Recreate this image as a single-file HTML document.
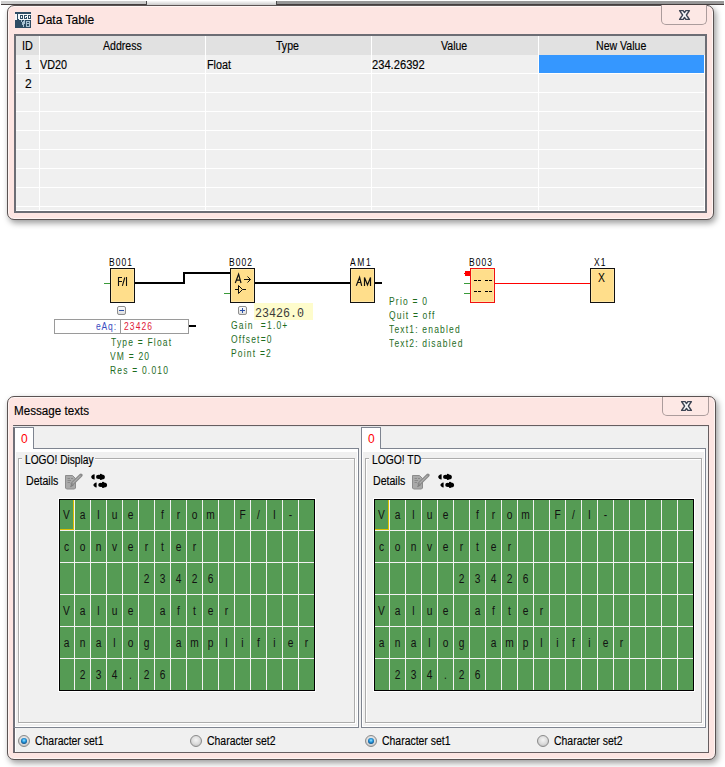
<!DOCTYPE html>
<html><head><meta charset="utf-8">
<style>
*{margin:0;padding:0;box-sizing:border-box}
html,body{width:725px;height:767px;overflow:hidden;background:#fff;font-family:"Liberation Sans",sans-serif;color:#000}
.a{position:absolute}
.t{position:absolute;white-space:pre;line-height:1}
.win{position:absolute;background:#fde5e2;border:1px solid #5a5252;border-radius:7px;box-shadow:inset 0 0 0 1px rgba(255,255,255,.6),2px 3px 6px rgba(0,0,0,.4)}
.closeb{position:absolute;border:1px solid #ab9c9c;border-top:none;border-radius:0 0 5px 5px;background:#fde8e5}
.ui{position:absolute;white-space:pre;line-height:1;font-size:12px;color:#000;-webkit-text-stroke:.15px #000}
.blk{position:absolute;width:25px;height:35px;border:1px solid #111;background:#ffde8b;box-shadow:inset 0 0 0 1px #ffe6a4}
.lbl{position:absolute;white-space:pre;font-size:10px;letter-spacing:1.2px;line-height:1;color:#000;transform:scaleX(.85);transform-origin:0 0}
.g{position:absolute;white-space:pre;font-size:10px;letter-spacing:1.4px;line-height:1;color:#1e6c1e;transform:scaleX(.85);transform-origin:0 0}
.w{position:absolute;background:#000}
.gr{position:absolute;background:#3a9a3a;height:1px}
.grid{position:absolute;border-collapse:collapse}
.lcd{position:absolute;background:#000;padding:1px}
.lc{background:#559b54;overflow:visible}
.lc span{position:absolute;left:0;top:1px;width:15px;height:31px;font-size:12px;line-height:31px;text-align:center;color:#111;transform:scaleX(.85)}
.s88{transform:scaleX(.88);transform-origin:0 0}
.s9{transform:scaleX(.9);transform-origin:0 0}
.s9c{transform:scaleX(.9);transform-origin:50% 0}
.radio{position:absolute;width:12px;height:12px;border-radius:50%;border:1px solid #8a8a8a;background:radial-gradient(circle at 50% 40%,#f4f4f4 0%,#dadada 55%,#c4c4c4 75%,#f8f8f8 90%)}
.radio.on::after{content:"";position:absolute;left:2px;top:2px;width:6px;height:6px;border-radius:50%;background:radial-gradient(circle at 50% 40%,#9ae4ff 0%,#2c9ee4 35%,#0f568f 70%,#16304a 100%)}
</style></head><body>

<!-- top strip (scrollbar) -->
<div class="a" style="left:1px;top:1px;width:145px;height:3px;background:#cfcfcf"></div>
<div class="a" style="left:147px;top:1px;width:129px;height:4px;background:linear-gradient(#f8f8f8,#d8d8d8)"></div>
<div class="a" style="left:277px;top:1px;width:447px;height:3px;background:#9a9a9a"></div>
<div class="a" style="left:1px;top:4px;width:145px;height:1px;background:#484242"></div>
<div class="a" style="left:277px;top:4px;width:447px;height:1px;background:#484242"></div>
<div class="a" style="left:146px;top:1px;width:1px;height:4px;background:#505050"></div>
<div class="a" style="left:276px;top:1px;width:1px;height:4px;background:#505050"></div>

<!-- ============ Data Table window ============ -->
<div class="win" style="left:7px;top:5px;width:707px;height:215px"></div>
<!-- icon -->
<svg class="a" style="left:15px;top:12px" width="16" height="16" viewBox="0 0 16 16" shape-rendering="crispEdges">
<rect width="16" height="16" fill="#2e4c64"/>
<rect x="0" y="2" width="16" height="6" fill="#f4f6f8"/>
<path d="M2 2h1v5h1v1H2z" fill="#2e4c64"/>
<path d="M5 3h3v4H5zM6 4h1v2H6z" fill="#2e4c64" fill-rule="evenodd"/>
<path d="M9 3h3v1h-2v2h1v-1h1v2H9z" fill="#2e4c64"/>
<path d="M13 3h3v4h-3zM14 4h1v2h-1z" fill="#2e4c64" fill-rule="evenodd"/>
<path d="M6 8h1l1 3 1-3h1v2l-1 5H8z" fill="#a9c1d2"/>
<path d="M11 9h4v6h-4zM12 10h2v1h-2zM12 12h2v2h-2z" fill="#a9c1d2" fill-rule="evenodd"/>
</svg>
<div class="ui" style="left:37px;top:14px">Data Table</div>
<div class="closeb" style="left:661px;top:5px;width:46px;height:20px"></div>
<svg class="a" style="left:678px;top:9px" width="13" height="12" viewBox="0 0 13 12">
<path d="M1.6 1.6H5.2L6.5 3.6L7.8 1.6H11.4L8.4 6L11.4 10.4H7.8L6.5 8.4L5.2 10.4H1.6L4.6 6Z" fill="#f8f8fa" stroke="#3c4352" stroke-width="1.4" stroke-linejoin="round"/>
</svg>

<!-- table -->
<div class="a" style="left:14px;top:34px;width:693px;height:179px;border:2px solid #6c6d74;background:#f0f0f0;box-shadow:inset -1px -1px 0 #fff"></div>
<div class="a" style="left:16px;top:36px;width:689px;height:19px;background:#e1e1e1"></div>
<!-- row lines -->
<div class="a" style="left:16px;top:73px;width:689px;height:1px;background:#fff"></div>
<div class="a" style="left:16px;top:92px;width:689px;height:1px;background:#fff"></div>
<div class="a" style="left:16px;top:111px;width:689px;height:1px;background:#fff"></div>
<div class="a" style="left:16px;top:130px;width:689px;height:1px;background:#fff"></div>
<div class="a" style="left:16px;top:149px;width:689px;height:1px;background:#fff"></div>
<div class="a" style="left:16px;top:168px;width:689px;height:1px;background:#fff"></div>
<div class="a" style="left:16px;top:187px;width:689px;height:1px;background:#fff"></div>
<div class="a" style="left:16px;top:206px;width:689px;height:1px;background:#fff"></div>
<!-- col lines -->
<div class="a" style="left:39px;top:36px;width:1px;height:174px;background:#fff"></div>
<div class="a" style="left:205px;top:36px;width:1px;height:174px;background:#fff"></div>
<div class="a" style="left:371px;top:36px;width:1px;height:174px;background:#fff"></div>
<div class="a" style="left:538px;top:36px;width:1px;height:174px;background:#fff"></div>
<div class="a" style="left:539px;top:55px;width:165px;height:18px;background:#3597ff"></div>
<!-- header text -->
<div class="ui s9" style="left:22px;top:40px">ID</div>
<div class="ui s88" style="left:103px;top:40px">Address</div>
<div class="ui s88" style="left:276px;top:40px">Type</div>
<div class="ui s88" style="left:441px;top:40px">Value</div>
<div class="ui s88" style="left:596px;top:40px">New Value</div>
<div class="ui" style="left:25px;top:59px">1</div>
<div class="ui" style="left:25px;top:78px">2</div>
<div class="ui s9" style="left:40px;top:59px">VD20</div>
<div class="ui s9" style="left:207px;top:59px">Float</div>
<div class="ui s9" style="left:372px;top:59px;transform:scaleX(.93)">234.26392</div>

<!-- ============ Diagram ============ -->
<div class="lbl" style="left:109px;top:258px">B001</div>
<div class="blk" style="left:110px;top:268px"></div>
<svg class="a" style="left:111px;top:269px" width="23" height="33" viewBox="0 0 23 33">
<path d="M7.5 8V17M7 8.5H11M7 12.5H11M13.8 8.5L11.4 16.8M15.5 8V17" stroke="#111" stroke-width="1.1" fill="none"/>
</svg>
<div class="gr" style="left:104px;top:283px;width:6px"></div>
<div class="w" style="left:135px;top:282px;width:50px;height:2px"></div>
<div class="w" style="left:183px;top:272px;width:2px;height:12px"></div>
<div class="w" style="left:183px;top:272px;width:47px;height:2px"></div>
<!-- minus btn -->
<div class="a" style="left:117px;top:306px;width:9px;height:9px;border:1px solid #8d8d8d;border-radius:2px;background:linear-gradient(#fdfdfd,#dedede)"></div>
<div class="a" style="left:119px;top:310px;width:5px;height:1px;background:#2a4fa8"></div>
<!-- eAq -->
<div class="a" style="left:54px;top:319px;width:135px;height:15px;border:1px solid #9a9a9a;background:#fff"></div>
<div class="a" style="left:120px;top:320px;width:1px;height:13px;background:#9a9a9a"></div>
<div class="t" style="left:96px;top:322px;font-size:10px;color:#3a4cc0;letter-spacing:1px;transform:scaleX(.85);transform-origin:0 0">eAq:</div>
<div class="t" style="left:124px;top:322px;font-size:10px;color:#e01838;letter-spacing:1.3px;transform:scaleX(.85);transform-origin:0 0">23426</div>
<div class="w" style="left:189px;top:325px;width:7px;height:2px"></div>
<div class="g" style="left:111px;top:338px">Type = Float</div>
<div class="g" style="left:110px;top:352px">VM = 20</div>
<div class="g" style="left:110px;top:366px">Res = 0.010</div>

<div class="lbl" style="left:229px;top:258px">B002</div>
<div class="blk" style="left:230px;top:268px"></div>
<svg class="a" style="left:231px;top:269px" width="23" height="33" viewBox="0 0 23 33">
<path d="M4.3 14L7.6 5.2L10 14M5.3 11.2H9.2" stroke="#111" stroke-width="1.2" fill="none"/>
<path d="M13 10.5H19.5M16.5 7.5L19.5 10.5L16.5 13.5" stroke="#111" stroke-width="1" fill="none"/>
<path d="M4 20.5H7.5M11.5 20.5H15M7.5 16.5V24.5L11.5 20.5Z" stroke="#111" stroke-width="1" fill="none"/>
</svg>
<div class="gr" style="left:224px;top:293px;width:6px"></div>
<div class="w" style="left:255px;top:282px;width:95px;height:2px"></div>
<div class="a" style="left:238px;top:306px;width:9px;height:9px;border:1px solid #8d8d8d;border-radius:2px;background:linear-gradient(#fdfdfd,#dedede)"></div>
<div class="a" style="left:240px;top:310px;width:5px;height:1px;background:#2a4fa8"></div>
<div class="a" style="left:242px;top:308px;width:1px;height:5px;background:#2a4fa8"></div>
<div class="a" style="left:254px;top:303px;width:59px;height:17px;background:#fefccc"></div>
<div class="t" style="left:255px;top:308px;font-family:'Liberation Mono',monospace;font-size:12px;color:#3a3a3a;transform:scaleX(.97);transform-origin:0 0">23426.0</div>
<div class="g" style="left:231px;top:321px">Gain  =1.0+</div>
<div class="g" style="left:231px;top:335px">Offset=0</div>
<div class="g" style="left:231px;top:349px">Point =2</div>

<div class="lbl" style="left:350px;top:258px;letter-spacing:1.9px">AM1</div>
<div class="blk" style="left:350px;top:268px"></div>
<svg class="a" style="left:351px;top:269px" width="23" height="33" viewBox="0 0 23 33">
<path d="M5.3 16.8L8.6 8.3L10.7 16.8M6.5 13.5H10M13.5 17V8.5L16.5 16L19.5 8.5V17" stroke="#111" stroke-width="1.2" fill="none"/>
</svg>
<div class="w" style="left:375px;top:282px;width:7px;height:2px"></div>
<div class="g" style="left:389px;top:297px">Prio = 0</div>
<div class="g" style="left:389px;top:311px">Quit = off</div>
<div class="g" style="left:389px;top:325px">Text1: enabled</div>
<div class="g" style="left:389px;top:339px">Text2: disabled</div>

<div class="lbl" style="left:469px;top:258px">B003</div>
<div class="blk" style="left:470px;top:268px;border-color:#f01010"></div>
<div class="a" style="left:465px;top:271px;width:5px;height:5px;background:#f00"></div>
<div class="a" style="left:464px;top:273px;width:2px;height:1px;background:#f00"></div>
<div class="gr" style="left:464px;top:283px;width:6px"></div>
<div class="gr" style="left:464px;top:293px;width:6px"></div>
<svg class="a" style="left:471px;top:269px" width="23" height="33" shape-rendering="crispEdges">
<path d="M3 11h3v1H3zM7 11h3v1H7zM14 11h3v1h-3zM18 11h3v1h-3zM3 22h3v1H3zM7 22h3v1H7zM14 22h3v1h-3zM18 22h3v1h-3z" fill="#000"/>
</svg>
<div class="a" style="left:495px;top:283px;width:95px;height:1px;background:#f00"></div>

<div class="lbl" style="left:594px;top:258px">X1</div>
<div class="blk" style="left:590px;top:268px"></div>
<div class="t" style="left:598px;top:272px;font-size:12px;transform:scaleX(.86);transform-origin:0 0">X</div>

<!-- ============ Message texts window ============ -->
<div class="win" style="left:7px;top:396px;width:709px;height:364px"></div>
<div class="ui" style="left:14px;top:405px;transform:scaleX(.97);transform-origin:0 0">Message texts</div>
<div class="closeb" style="left:662px;top:397px;width:47px;height:19px"></div>
<svg class="a" style="left:680px;top:400px" width="13" height="12" viewBox="0 0 13 12">
<path d="M1.6 1.6H5.2L6.5 3.6L7.8 1.6H11.4L8.4 6L11.4 10.4H7.8L6.5 8.4L5.2 10.4H1.6L4.6 6Z" fill="#f8f8fa" stroke="#3c4352" stroke-width="1.4" stroke-linejoin="round"/>
</svg>

<!-- outer container -->
<div class="a" style="left:13px;top:425px;width:696px;height:328px;border:1px solid #665e60;border-left:2px solid #6c6870;background:#f0f0f0;box-shadow:inset 1px 1px 0 #fff"></div>

<!-- left tab panel -->
<div class="a" style="left:13px;top:448px;width:346px;height:280px;border:1px solid #7e8490;border-left:2px solid #70707a;background:#f0f0f0;box-shadow:inset 1px 3px 0 #fff, inset -1px -1px 0 #fff"></div>
<div class="a" style="left:13px;top:427px;width:21px;height:22px;background:#fff;border-top:1px solid #7e8490;border-right:1px solid #7e8490;border-left:2px solid #707078"></div>
<div class="a" style="left:13px;top:426px;width:695px;height:1px;background:#e6e6e8"></div>
<div class="t" style="left:21px;top:433px;font-size:12px;color:#f00">0</div>
<div class="a" style="left:18px;top:458px;width:337px;height:265px;border:1px solid #acacac;box-shadow:inset 1px 1px 0 #fff,1px 1px 0 #fff"></div>
<div class="a" style="left:22px;top:454px;width:73px;height:10px;background:#f0f0f0"></div>
<div class="ui s88" style="left:25px;top:454px;transform:scaleX(.85)">LOGO! Display</div>
<div class="ui s88" style="left:26px;top:475px">Details</div>
<svg class="a" style="left:64px;top:473px" width="20" height="17" viewBox="0 0 20 17">
<path d="M1.5 2.5H8.5L11.5 5.5V15L10.5 16H2.5L1.5 15Z" fill="#a9a9a9" stroke="#8c8c8c"/>
<path d="M3.5 5.5H6M7 5.5H9M3.5 7.5H7M3.5 9.5H6" stroke="#8a8a8a" stroke-width="1"/>
<path d="M16.9 2.3L8.3 10.7" stroke="#8a8a8a" stroke-width="3.4" stroke-linecap="round"/>
<path d="M16.6 2.6L8.5 10.5" stroke="#b0b0b0" stroke-width="1.1"/>
<path d="M8.3 10.7L6.6 13.6L9.4 12.2" fill="#9a9a9a" stroke="#7e7e7e" stroke-width="1"/>
</svg>
<svg class="a" style="left:90px;top:472px" width="19" height="18" viewBox="0 0 19 18">
<path d="M4.6 2.3C2.6 2.5 1.2 3.8 1.2 4.9S2.6 7.4 4.6 7.6Z" fill="#000"/>
<ellipse cx="8.6" cy="4.9" rx="2.6" ry="2.1" fill="#000"/><ellipse cx="11.8" cy="4.9" rx="3.1" ry="2.5" fill="#000"/><circle cx="10.8" cy="2.8" r="1.05" fill="#000"/><circle cx="10.8" cy="7" r="1.05" fill="#000"/>
<path d="M6.6 10.4C4.8 10.6 3.4 12 3.4 13S4.8 15.4 6.6 15.6Z" fill="#000"/>
<ellipse cx="10.8" cy="12.9" rx="2.6" ry="2.1" fill="#000"/><ellipse cx="14" cy="12.9" rx="3.1" ry="2.5" fill="#000"/><circle cx="13" cy="10.8" r="1.05" fill="#000"/><circle cx="13" cy="15" r="1.05" fill="#000"/>
</svg>


<!-- right tab panel -->
<div class="a" style="left:361px;top:448px;width:345px;height:280px;border:1px solid #7e8490;background:#f0f0f0;box-shadow:inset 1px 3px 0 #fff, inset -1px -1px 0 #fff"></div>
<div class="a" style="left:361px;top:427px;width:20px;height:22px;background:#fff;border-top:1px solid #7e8490;border-right:1px solid #7e8490;border-left:1px solid #7e8490"></div>
<div class="a" style="left:362px;top:448px;width:18px;height:1px;background:#fff"></div>
<div class="t" style="left:368px;top:433px;font-size:12px;color:#f00">0</div>
<div class="a" style="left:365px;top:458px;width:337px;height:265px;border:1px solid #acacac;box-shadow:inset 1px 1px 0 #fff,1px 1px 0 #fff"></div>
<div class="a" style="left:369px;top:454px;width:52px;height:10px;background:#f0f0f0"></div>
<div class="ui s88" style="left:372px;top:454px;transform:scaleX(.86)">LOGO! TD</div>
<div class="ui s88" style="left:373px;top:475px">Details</div>
<svg class="a" style="left:411px;top:473px" width="20" height="17" viewBox="0 0 20 17">
<path d="M1.5 2.5H8.5L11.5 5.5V15L10.5 16H2.5L1.5 15Z" fill="#a9a9a9" stroke="#8c8c8c"/>
<path d="M3.5 5.5H6M7 5.5H9M3.5 7.5H7M3.5 9.5H6" stroke="#8a8a8a" stroke-width="1"/>
<path d="M16.9 2.3L8.3 10.7" stroke="#8a8a8a" stroke-width="3.4" stroke-linecap="round"/>
<path d="M16.6 2.6L8.5 10.5" stroke="#b0b0b0" stroke-width="1.1"/>
<path d="M8.3 10.7L6.6 13.6L9.4 12.2" fill="#9a9a9a" stroke="#7e7e7e" stroke-width="1"/>
</svg>
<svg class="a" style="left:437px;top:472px" width="19" height="18" viewBox="0 0 19 18">
<path d="M4.6 2.3C2.6 2.5 1.2 3.8 1.2 4.9S2.6 7.4 4.6 7.6Z" fill="#000"/>
<ellipse cx="8.6" cy="4.9" rx="2.6" ry="2.1" fill="#000"/><ellipse cx="11.8" cy="4.9" rx="3.1" ry="2.5" fill="#000"/><circle cx="10.8" cy="2.8" r="1.05" fill="#000"/><circle cx="10.8" cy="7" r="1.05" fill="#000"/>
<path d="M6.6 10.4C4.8 10.6 3.4 12 3.4 13S4.8 15.4 6.6 15.6Z" fill="#000"/>
<ellipse cx="10.8" cy="12.9" rx="2.6" ry="2.1" fill="#000"/><ellipse cx="14" cy="12.9" rx="3.1" ry="2.5" fill="#000"/><circle cx="13" cy="10.8" r="1.05" fill="#000"/><circle cx="13" cy="15" r="1.05" fill="#000"/>
</svg>


<div class="a" style="left:58px;top:498px;width:258px;height:194px;background:#fff"></div>
<div class="a" style="left:59px;top:499px;width:256px;height:192px;border:1px solid #000;background:#f2f2f2"></div>
<div class="a lc" style="left:60px;top:500px;width:14px;height:30px;box-shadow:inset -1px -1px 0 #d8c000;"><span style="left:-1px;top:0px;">V</span></div>
<div class="a lc" style="left:75px;top:500px;width:15px;height:30px;"><span style="top:0px;">a</span></div>
<div class="a lc" style="left:91px;top:500px;width:15px;height:30px;"><span style="top:0px;">l</span></div>
<div class="a lc" style="left:107px;top:500px;width:15px;height:30px;"><span style="top:0px;">u</span></div>
<div class="a lc" style="left:123px;top:500px;width:15px;height:30px;"><span style="top:0px;">e</span></div>
<div class="a lc" style="left:139px;top:500px;width:15px;height:30px;"></div>
<div class="a lc" style="left:155px;top:500px;width:15px;height:30px;"><span style="top:0px;">f</span></div>
<div class="a lc" style="left:171px;top:500px;width:15px;height:30px;"><span style="top:0px;">r</span></div>
<div class="a lc" style="left:187px;top:500px;width:15px;height:30px;"><span style="top:0px;">o</span></div>
<div class="a lc" style="left:203px;top:500px;width:15px;height:30px;"><span style="top:0px;">m</span></div>
<div class="a lc" style="left:219px;top:500px;width:15px;height:30px;"></div>
<div class="a lc" style="left:235px;top:500px;width:15px;height:30px;"><span style="top:0px;">F</span></div>
<div class="a lc" style="left:251px;top:500px;width:15px;height:30px;"><span style="top:0px;">/</span></div>
<div class="a lc" style="left:267px;top:500px;width:15px;height:30px;"><span style="top:0px;">I</span></div>
<div class="a lc" style="left:283px;top:500px;width:15px;height:30px;"><span style="top:0px;">-</span></div>
<div class="a lc" style="left:299px;top:500px;width:15px;height:30px;"></div>
<div class="a lc" style="left:60px;top:531px;width:14px;height:31px;"><span style="left:-1px;">c</span></div>
<div class="a lc" style="left:75px;top:531px;width:15px;height:31px;"><span>o</span></div>
<div class="a lc" style="left:91px;top:531px;width:15px;height:31px;"><span>n</span></div>
<div class="a lc" style="left:107px;top:531px;width:15px;height:31px;"><span>v</span></div>
<div class="a lc" style="left:123px;top:531px;width:15px;height:31px;"><span>e</span></div>
<div class="a lc" style="left:139px;top:531px;width:15px;height:31px;"><span>r</span></div>
<div class="a lc" style="left:155px;top:531px;width:15px;height:31px;"><span>t</span></div>
<div class="a lc" style="left:171px;top:531px;width:15px;height:31px;"><span>e</span></div>
<div class="a lc" style="left:187px;top:531px;width:15px;height:31px;"><span>r</span></div>
<div class="a lc" style="left:203px;top:531px;width:15px;height:31px;"></div>
<div class="a lc" style="left:219px;top:531px;width:15px;height:31px;"></div>
<div class="a lc" style="left:235px;top:531px;width:15px;height:31px;"></div>
<div class="a lc" style="left:251px;top:531px;width:15px;height:31px;"></div>
<div class="a lc" style="left:267px;top:531px;width:15px;height:31px;"></div>
<div class="a lc" style="left:283px;top:531px;width:15px;height:31px;"></div>
<div class="a lc" style="left:299px;top:531px;width:15px;height:31px;"></div>
<div class="a lc" style="left:60px;top:563px;width:14px;height:31px;"></div>
<div class="a lc" style="left:75px;top:563px;width:15px;height:31px;"></div>
<div class="a lc" style="left:91px;top:563px;width:15px;height:31px;"></div>
<div class="a lc" style="left:107px;top:563px;width:15px;height:31px;"></div>
<div class="a lc" style="left:123px;top:563px;width:15px;height:31px;"></div>
<div class="a lc" style="left:139px;top:563px;width:15px;height:31px;"><span>2</span></div>
<div class="a lc" style="left:155px;top:563px;width:15px;height:31px;"><span>3</span></div>
<div class="a lc" style="left:171px;top:563px;width:15px;height:31px;"><span>4</span></div>
<div class="a lc" style="left:187px;top:563px;width:15px;height:31px;"><span>2</span></div>
<div class="a lc" style="left:203px;top:563px;width:15px;height:31px;"><span>6</span></div>
<div class="a lc" style="left:219px;top:563px;width:15px;height:31px;"></div>
<div class="a lc" style="left:235px;top:563px;width:15px;height:31px;"></div>
<div class="a lc" style="left:251px;top:563px;width:15px;height:31px;"></div>
<div class="a lc" style="left:267px;top:563px;width:15px;height:31px;"></div>
<div class="a lc" style="left:283px;top:563px;width:15px;height:31px;"></div>
<div class="a lc" style="left:299px;top:563px;width:15px;height:31px;"></div>
<div class="a lc" style="left:60px;top:595px;width:14px;height:31px;"><span style="left:-1px;">V</span></div>
<div class="a lc" style="left:75px;top:595px;width:15px;height:31px;"><span>a</span></div>
<div class="a lc" style="left:91px;top:595px;width:15px;height:31px;"><span>l</span></div>
<div class="a lc" style="left:107px;top:595px;width:15px;height:31px;"><span>u</span></div>
<div class="a lc" style="left:123px;top:595px;width:15px;height:31px;"><span>e</span></div>
<div class="a lc" style="left:139px;top:595px;width:15px;height:31px;"></div>
<div class="a lc" style="left:155px;top:595px;width:15px;height:31px;"><span>a</span></div>
<div class="a lc" style="left:171px;top:595px;width:15px;height:31px;"><span>f</span></div>
<div class="a lc" style="left:187px;top:595px;width:15px;height:31px;"><span>t</span></div>
<div class="a lc" style="left:203px;top:595px;width:15px;height:31px;"><span>e</span></div>
<div class="a lc" style="left:219px;top:595px;width:15px;height:31px;"><span>r</span></div>
<div class="a lc" style="left:235px;top:595px;width:15px;height:31px;"></div>
<div class="a lc" style="left:251px;top:595px;width:15px;height:31px;"></div>
<div class="a lc" style="left:267px;top:595px;width:15px;height:31px;"></div>
<div class="a lc" style="left:283px;top:595px;width:15px;height:31px;"></div>
<div class="a lc" style="left:299px;top:595px;width:15px;height:31px;"></div>
<div class="a lc" style="left:60px;top:627px;width:14px;height:31px;"><span style="left:-1px;">a</span></div>
<div class="a lc" style="left:75px;top:627px;width:15px;height:31px;"><span>n</span></div>
<div class="a lc" style="left:91px;top:627px;width:15px;height:31px;"><span>a</span></div>
<div class="a lc" style="left:107px;top:627px;width:15px;height:31px;"><span>l</span></div>
<div class="a lc" style="left:123px;top:627px;width:15px;height:31px;"><span>o</span></div>
<div class="a lc" style="left:139px;top:627px;width:15px;height:31px;"><span>g</span></div>
<div class="a lc" style="left:155px;top:627px;width:15px;height:31px;"></div>
<div class="a lc" style="left:171px;top:627px;width:15px;height:31px;"><span>a</span></div>
<div class="a lc" style="left:187px;top:627px;width:15px;height:31px;"><span>m</span></div>
<div class="a lc" style="left:203px;top:627px;width:15px;height:31px;"><span>p</span></div>
<div class="a lc" style="left:219px;top:627px;width:15px;height:31px;"><span>l</span></div>
<div class="a lc" style="left:235px;top:627px;width:15px;height:31px;"><span>i</span></div>
<div class="a lc" style="left:251px;top:627px;width:15px;height:31px;"><span>f</span></div>
<div class="a lc" style="left:267px;top:627px;width:15px;height:31px;"><span>i</span></div>
<div class="a lc" style="left:283px;top:627px;width:15px;height:31px;"><span>e</span></div>
<div class="a lc" style="left:299px;top:627px;width:15px;height:31px;"><span>r</span></div>
<div class="a lc" style="left:60px;top:659px;width:14px;height:31px;"></div>
<div class="a lc" style="left:75px;top:659px;width:15px;height:31px;"><span>2</span></div>
<div class="a lc" style="left:91px;top:659px;width:15px;height:31px;"><span>3</span></div>
<div class="a lc" style="left:107px;top:659px;width:15px;height:31px;"><span>4</span></div>
<div class="a lc" style="left:123px;top:659px;width:15px;height:31px;"><span>.</span></div>
<div class="a lc" style="left:139px;top:659px;width:15px;height:31px;"><span>2</span></div>
<div class="a lc" style="left:155px;top:659px;width:15px;height:31px;"><span>6</span></div>
<div class="a lc" style="left:171px;top:659px;width:15px;height:31px;"></div>
<div class="a lc" style="left:187px;top:659px;width:15px;height:31px;"></div>
<div class="a lc" style="left:203px;top:659px;width:15px;height:31px;"></div>
<div class="a lc" style="left:219px;top:659px;width:15px;height:31px;"></div>
<div class="a lc" style="left:235px;top:659px;width:15px;height:31px;"></div>
<div class="a lc" style="left:251px;top:659px;width:15px;height:31px;"></div>
<div class="a lc" style="left:267px;top:659px;width:15px;height:31px;"></div>
<div class="a lc" style="left:283px;top:659px;width:15px;height:31px;"></div>
<div class="a lc" style="left:299px;top:659px;width:15px;height:31px;"></div>
<div class="a" style="left:373px;top:498px;width:322px;height:194px;background:#fff"></div>
<div class="a" style="left:374px;top:499px;width:320px;height:192px;border:1px solid #000;background:#f2f2f2"></div>
<div class="a lc" style="left:375px;top:500px;width:14px;height:30px;box-shadow:inset -1px -1px 0 #d8c000;"><span style="left:-1px;top:0px;">V</span></div>
<div class="a lc" style="left:390px;top:500px;width:15px;height:30px;"><span style="top:0px;">a</span></div>
<div class="a lc" style="left:406px;top:500px;width:15px;height:30px;"><span style="top:0px;">l</span></div>
<div class="a lc" style="left:422px;top:500px;width:15px;height:30px;"><span style="top:0px;">u</span></div>
<div class="a lc" style="left:438px;top:500px;width:15px;height:30px;"><span style="top:0px;">e</span></div>
<div class="a lc" style="left:454px;top:500px;width:15px;height:30px;"></div>
<div class="a lc" style="left:470px;top:500px;width:15px;height:30px;"><span style="top:0px;">f</span></div>
<div class="a lc" style="left:486px;top:500px;width:15px;height:30px;"><span style="top:0px;">r</span></div>
<div class="a lc" style="left:502px;top:500px;width:15px;height:30px;"><span style="top:0px;">o</span></div>
<div class="a lc" style="left:518px;top:500px;width:15px;height:30px;"><span style="top:0px;">m</span></div>
<div class="a lc" style="left:534px;top:500px;width:15px;height:30px;"></div>
<div class="a lc" style="left:550px;top:500px;width:15px;height:30px;"><span style="top:0px;">F</span></div>
<div class="a lc" style="left:566px;top:500px;width:15px;height:30px;"><span style="top:0px;">/</span></div>
<div class="a lc" style="left:582px;top:500px;width:15px;height:30px;"><span style="top:0px;">I</span></div>
<div class="a lc" style="left:598px;top:500px;width:15px;height:30px;"><span style="top:0px;">-</span></div>
<div class="a lc" style="left:614px;top:500px;width:15px;height:30px;"></div>
<div class="a lc" style="left:630px;top:500px;width:15px;height:30px;"></div>
<div class="a lc" style="left:646px;top:500px;width:15px;height:30px;"></div>
<div class="a lc" style="left:662px;top:500px;width:15px;height:30px;"></div>
<div class="a lc" style="left:678px;top:500px;width:15px;height:30px;"></div>
<div class="a lc" style="left:375px;top:531px;width:14px;height:31px;"><span style="left:-1px;">c</span></div>
<div class="a lc" style="left:390px;top:531px;width:15px;height:31px;"><span>o</span></div>
<div class="a lc" style="left:406px;top:531px;width:15px;height:31px;"><span>n</span></div>
<div class="a lc" style="left:422px;top:531px;width:15px;height:31px;"><span>v</span></div>
<div class="a lc" style="left:438px;top:531px;width:15px;height:31px;"><span>e</span></div>
<div class="a lc" style="left:454px;top:531px;width:15px;height:31px;"><span>r</span></div>
<div class="a lc" style="left:470px;top:531px;width:15px;height:31px;"><span>t</span></div>
<div class="a lc" style="left:486px;top:531px;width:15px;height:31px;"><span>e</span></div>
<div class="a lc" style="left:502px;top:531px;width:15px;height:31px;"><span>r</span></div>
<div class="a lc" style="left:518px;top:531px;width:15px;height:31px;"></div>
<div class="a lc" style="left:534px;top:531px;width:15px;height:31px;"></div>
<div class="a lc" style="left:550px;top:531px;width:15px;height:31px;"></div>
<div class="a lc" style="left:566px;top:531px;width:15px;height:31px;"></div>
<div class="a lc" style="left:582px;top:531px;width:15px;height:31px;"></div>
<div class="a lc" style="left:598px;top:531px;width:15px;height:31px;"></div>
<div class="a lc" style="left:614px;top:531px;width:15px;height:31px;"></div>
<div class="a lc" style="left:630px;top:531px;width:15px;height:31px;"></div>
<div class="a lc" style="left:646px;top:531px;width:15px;height:31px;"></div>
<div class="a lc" style="left:662px;top:531px;width:15px;height:31px;"></div>
<div class="a lc" style="left:678px;top:531px;width:15px;height:31px;"></div>
<div class="a lc" style="left:375px;top:563px;width:14px;height:31px;"></div>
<div class="a lc" style="left:390px;top:563px;width:15px;height:31px;"></div>
<div class="a lc" style="left:406px;top:563px;width:15px;height:31px;"></div>
<div class="a lc" style="left:422px;top:563px;width:15px;height:31px;"></div>
<div class="a lc" style="left:438px;top:563px;width:15px;height:31px;"></div>
<div class="a lc" style="left:454px;top:563px;width:15px;height:31px;"><span>2</span></div>
<div class="a lc" style="left:470px;top:563px;width:15px;height:31px;"><span>3</span></div>
<div class="a lc" style="left:486px;top:563px;width:15px;height:31px;"><span>4</span></div>
<div class="a lc" style="left:502px;top:563px;width:15px;height:31px;"><span>2</span></div>
<div class="a lc" style="left:518px;top:563px;width:15px;height:31px;"><span>6</span></div>
<div class="a lc" style="left:534px;top:563px;width:15px;height:31px;"></div>
<div class="a lc" style="left:550px;top:563px;width:15px;height:31px;"></div>
<div class="a lc" style="left:566px;top:563px;width:15px;height:31px;"></div>
<div class="a lc" style="left:582px;top:563px;width:15px;height:31px;"></div>
<div class="a lc" style="left:598px;top:563px;width:15px;height:31px;"></div>
<div class="a lc" style="left:614px;top:563px;width:15px;height:31px;"></div>
<div class="a lc" style="left:630px;top:563px;width:15px;height:31px;"></div>
<div class="a lc" style="left:646px;top:563px;width:15px;height:31px;"></div>
<div class="a lc" style="left:662px;top:563px;width:15px;height:31px;"></div>
<div class="a lc" style="left:678px;top:563px;width:15px;height:31px;"></div>
<div class="a lc" style="left:375px;top:595px;width:14px;height:31px;"><span style="left:-1px;">V</span></div>
<div class="a lc" style="left:390px;top:595px;width:15px;height:31px;"><span>a</span></div>
<div class="a lc" style="left:406px;top:595px;width:15px;height:31px;"><span>l</span></div>
<div class="a lc" style="left:422px;top:595px;width:15px;height:31px;"><span>u</span></div>
<div class="a lc" style="left:438px;top:595px;width:15px;height:31px;"><span>e</span></div>
<div class="a lc" style="left:454px;top:595px;width:15px;height:31px;"></div>
<div class="a lc" style="left:470px;top:595px;width:15px;height:31px;"><span>a</span></div>
<div class="a lc" style="left:486px;top:595px;width:15px;height:31px;"><span>f</span></div>
<div class="a lc" style="left:502px;top:595px;width:15px;height:31px;"><span>t</span></div>
<div class="a lc" style="left:518px;top:595px;width:15px;height:31px;"><span>e</span></div>
<div class="a lc" style="left:534px;top:595px;width:15px;height:31px;"><span>r</span></div>
<div class="a lc" style="left:550px;top:595px;width:15px;height:31px;"></div>
<div class="a lc" style="left:566px;top:595px;width:15px;height:31px;"></div>
<div class="a lc" style="left:582px;top:595px;width:15px;height:31px;"></div>
<div class="a lc" style="left:598px;top:595px;width:15px;height:31px;"></div>
<div class="a lc" style="left:614px;top:595px;width:15px;height:31px;"></div>
<div class="a lc" style="left:630px;top:595px;width:15px;height:31px;"></div>
<div class="a lc" style="left:646px;top:595px;width:15px;height:31px;"></div>
<div class="a lc" style="left:662px;top:595px;width:15px;height:31px;"></div>
<div class="a lc" style="left:678px;top:595px;width:15px;height:31px;"></div>
<div class="a lc" style="left:375px;top:627px;width:14px;height:31px;"><span style="left:-1px;">a</span></div>
<div class="a lc" style="left:390px;top:627px;width:15px;height:31px;"><span>n</span></div>
<div class="a lc" style="left:406px;top:627px;width:15px;height:31px;"><span>a</span></div>
<div class="a lc" style="left:422px;top:627px;width:15px;height:31px;"><span>l</span></div>
<div class="a lc" style="left:438px;top:627px;width:15px;height:31px;"><span>o</span></div>
<div class="a lc" style="left:454px;top:627px;width:15px;height:31px;"><span>g</span></div>
<div class="a lc" style="left:470px;top:627px;width:15px;height:31px;"></div>
<div class="a lc" style="left:486px;top:627px;width:15px;height:31px;"><span>a</span></div>
<div class="a lc" style="left:502px;top:627px;width:15px;height:31px;"><span>m</span></div>
<div class="a lc" style="left:518px;top:627px;width:15px;height:31px;"><span>p</span></div>
<div class="a lc" style="left:534px;top:627px;width:15px;height:31px;"><span>l</span></div>
<div class="a lc" style="left:550px;top:627px;width:15px;height:31px;"><span>i</span></div>
<div class="a lc" style="left:566px;top:627px;width:15px;height:31px;"><span>f</span></div>
<div class="a lc" style="left:582px;top:627px;width:15px;height:31px;"><span>i</span></div>
<div class="a lc" style="left:598px;top:627px;width:15px;height:31px;"><span>e</span></div>
<div class="a lc" style="left:614px;top:627px;width:15px;height:31px;"><span>r</span></div>
<div class="a lc" style="left:630px;top:627px;width:15px;height:31px;"></div>
<div class="a lc" style="left:646px;top:627px;width:15px;height:31px;"></div>
<div class="a lc" style="left:662px;top:627px;width:15px;height:31px;"></div>
<div class="a lc" style="left:678px;top:627px;width:15px;height:31px;"></div>
<div class="a lc" style="left:375px;top:659px;width:14px;height:31px;"></div>
<div class="a lc" style="left:390px;top:659px;width:15px;height:31px;"><span>2</span></div>
<div class="a lc" style="left:406px;top:659px;width:15px;height:31px;"><span>3</span></div>
<div class="a lc" style="left:422px;top:659px;width:15px;height:31px;"><span>4</span></div>
<div class="a lc" style="left:438px;top:659px;width:15px;height:31px;"><span>.</span></div>
<div class="a lc" style="left:454px;top:659px;width:15px;height:31px;"><span>2</span></div>
<div class="a lc" style="left:470px;top:659px;width:15px;height:31px;"><span>6</span></div>
<div class="a lc" style="left:486px;top:659px;width:15px;height:31px;"></div>
<div class="a lc" style="left:502px;top:659px;width:15px;height:31px;"></div>
<div class="a lc" style="left:518px;top:659px;width:15px;height:31px;"></div>
<div class="a lc" style="left:534px;top:659px;width:15px;height:31px;"></div>
<div class="a lc" style="left:550px;top:659px;width:15px;height:31px;"></div>
<div class="a lc" style="left:566px;top:659px;width:15px;height:31px;"></div>
<div class="a lc" style="left:582px;top:659px;width:15px;height:31px;"></div>
<div class="a lc" style="left:598px;top:659px;width:15px;height:31px;"></div>
<div class="a lc" style="left:614px;top:659px;width:15px;height:31px;"></div>
<div class="a lc" style="left:630px;top:659px;width:15px;height:31px;"></div>
<div class="a lc" style="left:646px;top:659px;width:15px;height:31px;"></div>
<div class="a lc" style="left:662px;top:659px;width:15px;height:31px;"></div>
<div class="a lc" style="left:678px;top:659px;width:15px;height:31px;"></div>

<!-- radios -->
<div class="radio on" style="left:18px;top:735px"></div>
<div class="ui s88" style="left:35px;top:735px;transform:scaleX(.87)">Character set1</div>
<div class="radio" style="left:190px;top:735px"></div>
<div class="ui s88" style="left:207px;top:735px;transform:scaleX(.87)">Character set2</div>
<div class="radio on" style="left:365px;top:735px"></div>
<div class="ui s88" style="left:382px;top:735px;transform:scaleX(.87)">Character set1</div>
<div class="radio" style="left:537px;top:735px"></div>
<div class="ui s88" style="left:554px;top:735px;transform:scaleX(.87)">Character set2</div>

</body></html>
